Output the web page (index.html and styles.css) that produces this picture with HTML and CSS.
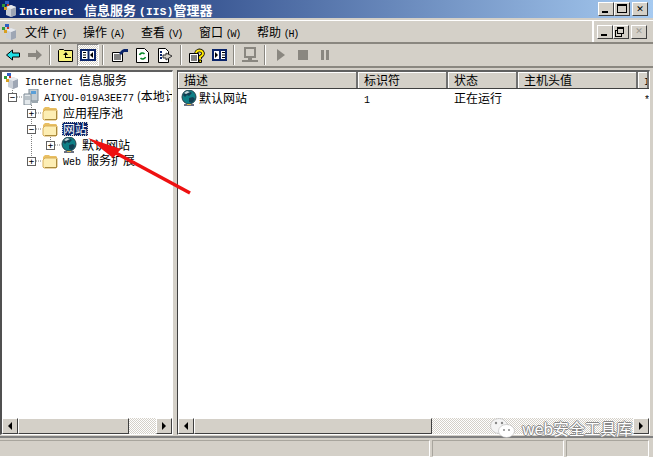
FILE: index.html
```html
<!DOCTYPE html>
<html lang="zh">
<head>
  <meta charset="UTF-8">
  <title>Internet 信息服务 (IIS)管理器</title>
  <link rel="stylesheet" href="styles.css">
</head>
<body>
  <svg class="defs" width="0" height="0">
    <symbol id="folder" viewBox="0 0 16 16">
      <path d="M1 4l2-2h4l1 1h6l1 1v10H1z" fill="#e9bf62"/>
      <path d="M1 7l2-2h12v9l-1 1H2l-1-1z" fill="#fdeeb4" stroke="#d8ae58"/>
      <path d="M3 14.5h11.5V6" fill="none" stroke="#a98a3c"/>
    </symbol>
    <symbol id="globe" viewBox="0 0 16 16">
      <circle cx="8" cy="7" r="7" fill="#0f7f86" stroke="#27404a"/>
      <path d="M4 2l4-1 3 2-3 3-2-1-2 2-2-2zM8 8l4-1 2 2-3 4-3-1z" fill="#123f52"/>
      <path d="M3 3l3-2 3 1-4 2z" fill="#c8d8dc"/>
      <path d="M3 14h10v2H3z" fill="#6b6f80"/>
      <path d="M6 14h4v1H6z" fill="#e0b84c"/>
    </symbol>
    <symbol id="server" viewBox="0 0 16 16">
      <path d="M6 0h9v12H6z" fill="#c3ccd2" stroke="#7c8a95"/>
      <path d="M8 2h5v3H8z" fill="#5a9fd8"/>
      <path d="M1 5h7v11H1z" fill="#e4e9ec" stroke="#7c8a95"/>
      <path d="M2 8h5M2 10h5" stroke="#8b98a2"/>
      <path d="M9 12h6v2H9z" fill="#9aa6ae"/>
    </symbol>
    <symbol id="iis" viewBox="0 0 16 16">
      <path d="M4 6l5-2 5 2v8l-5 2-5-2z" fill="#c9ced6"/>
      <path d="M9 8v8l5-2V6z" fill="#9ea6b4"/>
      <path d="M4 6l5 2 5-2-5-2z" fill="#e6e9ee"/>
      <path d="M0 3h3v3H0z" fill="#2f9a3c"/>
      <path d="M3 0h4v3H3z" fill="#2d5fc4"/>
      <path d="M2 6h3v3H2z" fill="#d8a020"/>
      <path d="M5 3h2v2H5z" fill="#c83c28"/>
    </symbol>
  </svg>

  <div class="titlebar">
    <svg class="title-icon"><use href="#iis"/></svg>
    <div class="title-text"><span class="mono">Internet </span> 信息服务 <span class="mono">(IIS)</span>管理器</div>
    <div class="caption-btns">
      <button class="cap"><span class="glyph-min"></span></button>
      <button class="cap"><span class="glyph-max"></span></button>
      <button class="cap cap-close">✕</button>
    </div>
  </div>

  <div class="menubar">
    <svg class="menu-icon"><use href="#iis"/></svg>
    <div class="menu-item">文件 <span class="hot">(F)</span></div>
    <div class="menu-item">操作 <span class="hot">(A)</span></div>
    <div class="menu-item">查看 <span class="hot">(V)</span></div>
    <div class="menu-item">窗口 <span class="hot">(W)</span></div>
    <div class="menu-item">帮助 <span class="hot">(H)</span></div>
    <div class="child-btns">
      <button class="cap"><span class="glyph-min"></span></button>
      <button class="cap"><span class="glyph-restore"></span></button>
      <button class="cap cap-off">✕</button>
    </div>
  </div>

  <div class="toolbar">
    <div class="tb"><svg width="14" height="14"><path d="M.5 7L6.5 2v3h7v4h-7v3z" fill="#1fe0e6" stroke="#000"/></svg></div>
    <div class="tb"><svg width="14" height="14"><path d="M14 7L8 1.5V5H0v4h8v3.5z" fill="#8a8780"/></svg></div>
    <div class="sep"></div>
    <div class="tb"><svg width="16" height="14"><path d="M.5 13.5V2.5l1-1h4l1 1h8v11z" fill="#f8f27a" stroke="#000"/><path d="M8 4L5 7h2v3h6V9H8V7h2z" fill="#000"/></svg></div>
    <div class="tb tb-on"><svg width="16" height="12"><path d="M1 1h14v10H1z" fill="#fff" stroke="#0a246a" stroke-width="2"/><path d="M8.5 1v10" stroke="#0a246a" stroke-width="2"/><path d="M3 3.5h3M3 6h3M3 8.5h3" stroke="#000"/><path d="M13 3v6l-3-3z" fill="#000"/></svg></div>
    <div class="sep"></div>
    <div class="tb tb-wide"><svg width="16" height="14"><path d="M.5 4.5h10v9H.5z" fill="#fff" stroke="#000"/><path d="M2 7h7M2 9h7M2 11h7" stroke="#000"/><path d="M7 5l3-3 2-1h4v3h-4l-3 3z" fill="#0a246a"/></svg></div>
    <div class="tb tb-wide"><svg width="13" height="15"><path d="M.5.5h8l4 4v10H.5z" fill="#fff" stroke="#000"/><path d="M3.5 7a3 3 0 0 1 5-1M9.5 9a3 3 0 0 1-5 1" fill="none" stroke="#0a8a2a" stroke-width="1.6"/></svg></div>
    <div class="tb tb-wide"><svg width="15" height="15"><path d="M.5.5h7l3 3v11H.5z" fill="#fff" stroke="#000"/><path d="M2 4h2M2 7h2M2 10h2" stroke="#0a246a" stroke-width="2"/><path d="M8 5v2H5v3h3v2l6-4z" fill="#d4d0c8" stroke="#333"/></svg></div>
    <div class="sep"></div>
    <div class="tb"><svg width="16" height="15"><path d="M.5 5.5h9v9h-9z" fill="#fff" stroke="#000"/><path d="M2 8h6M2 10h6M2 12h6" stroke="#000"/><path d="M7 5a3.5 3 0 1 1 6 2.5L11 9v2" fill="none" stroke="#000" stroke-width="3.6"/><path d="M7 5a3.5 3 0 1 1 6 2.5L11 9v2" fill="none" stroke="#ffe800" stroke-width="2"/><path d="M10 12h2.5v2.5H10z" fill="#ffe800" stroke="#000"/></svg></div>
    <div class="tb"><svg width="15" height="12"><path d="M1 1h13v10H1z" fill="#fff" stroke="#0a246a" stroke-width="2"/><path d="M8 1v10" stroke="#0a246a" stroke-width="2"/><path d="M10 3.5h3M10 6h3M10 8.5h3" stroke="#000"/><path d="M3 3v6l3-3z" fill="#000"/></svg></div>
    <div class="sep"></div>
    <div class="tb"><svg width="18" height="16"><path d="M4 1h10v9H4z" fill="none" stroke="#8a8780" stroke-width="2"/><path d="M1 13h16v2H1zM7 10h4v3H7z" fill="#8a8780"/></svg></div>
    <div class="sep"></div>
    <div class="tb"><svg width="8" height="12"><path d="M0 0l8 6-8 6z" fill="#8a8780"/></svg></div>
    <div class="tb"><svg width="10" height="10"><path d="M0 0h10v10H0z" fill="#8a8780"/></svg></div>
    <div class="tb"><svg width="8" height="10"><path d="M0 0h3v10H0zM5 0h3v10H5z" fill="#8a8780"/></svg></div>
  </div>

  <div class="panes">
    <div class="pane pane-left">
      <div class="pane-body tree">
        <svg class="tree-lines" width="64" height="100">
          <path d="M12.5 16V22M17 25H23M31.5 33V89M36 41H42M36 57H42M36 89H42M50.5 63V69M55 73H61" fill="none" stroke="#808080" stroke-dasharray="1 1"/>
        </svg>
        <div class="node lvl0"><svg class="node-icon"><use href="#iis"/></svg><span class="label"><span class="mono-sm">Internet </span> 信息服务</span></div>
        <div class="node lvl1"><span class="exp">−</span><svg class="node-icon"><use href="#server"/></svg><span class="label"><span class="mono-sm">AIYOU-019A3EE77</span> (本地计算机)</span></div>
        <div class="node lvl2"><span class="exp">+</span><svg class="node-icon"><use href="#folder"/></svg><span class="label">应用程序池</span></div>
        <div class="node lvl2"><span class="exp">−</span><svg class="node-icon"><use href="#folder"/></svg><span class="label label-sel">网站</span></div>
        <div class="node lvl3"><span class="exp">+</span><svg class="node-icon"><use href="#globe"/></svg><span class="label">默认网站</span></div>
        <div class="node lvl2"><span class="exp">+</span><svg class="node-icon"><use href="#folder"/></svg><span class="label"><span class="mono-sm">Web </span> 服务扩展</span></div>
      </div>
      <div class="hscroll">
        <div class="sb-btn"><span class="arrow-l"></span></div>
        <div class="sb-thumb thumb-left"></div>
        <div class="sb-track"></div>
        <div class="sb-btn"><span class="arrow-r"></span></div>
      </div>
    </div>

    <div class="pane pane-right">
      <div class="pane-body list">
        <div class="list-head">
          <div class="col col-name">描述</div>
          <div class="col col-id">标识符</div>
          <div class="col col-state">状态</div>
          <div class="col col-host">主机头值</div>
          <div class="col col-ip"><span class="mono-sm">I</span></div>
        </div>
        <div class="list-row">
          <div class="cell col-name cell-name"><svg class="node-icon"><use href="#globe"/></svg>默认网站</div>
          <div class="cell col-id"><span class="mono-sm">1</span></div>
          <div class="cell col-state">正在运行</div>
          <div class="cell col-host"></div>
          <div class="cell col-ip"><span class="mono-sm">*</span></div>
        </div>
      </div>
      <div class="hscroll">
        <div class="sb-btn"><span class="arrow-l"></span></div>
        <div class="sb-thumb thumb-right"></div>
        <div class="sb-track"></div>
        <div class="sb-btn"><span class="arrow-r"></span></div>
      </div>
    </div>
  </div>

  <div class="statusbar">
    <div class="st st-a"></div>
    <div class="st st-b"></div>
    <div class="st st-c"></div>
  </div>

  <svg class="red-arrow" width="653" height="457">
    <path d="M190 193L114 152" stroke="#ee1111" stroke-width="3.5" fill="none"/>
    <path d="M88 138L121 149 113 158z" fill="#ee1111"/>
  </svg>

  <div class="watermark">
    <svg width="25" height="20" viewBox="0 0 25 20">
      <ellipse cx="9" cy="8" rx="8.5" ry="7.5" fill="#f4f4f4" stroke="#aaa" stroke-width="0.5"/>
      <ellipse cx="16.5" cy="13" rx="8" ry="6.5" fill="#fff" stroke="#aaa" stroke-width="0.5"/>
      <circle cx="6" cy="5" r="1.2" fill="#888"/><circle cx="12" cy="5" r="1.2" fill="#888"/>
      <circle cx="14" cy="12" r="1" fill="#888"/><circle cx="19" cy="12" r="1" fill="#888"/>
    </svg>
    <span>web安全工具库</span>
  </div>
</body>
</html>
```

FILE: styles.css
```css
* {
  box-sizing: border-box;
}
body {
  margin: 0;
  width: 653px;
  height: 457px;
  overflow: hidden;
  position: relative;
  display: flex;
  flex-direction: column;
  background: #d4d0c8;
  font-family: "Noto Sans CJK SC", sans-serif;
  font-size: 12px;
  color: #000;
}
.defs {
  position: absolute;
}
.mono {
  font-family: "Liberation Mono", monospace;
  font-size: 11px;
  letter-spacing: 0.3px;
}
.mono-sm {
  font-family: "Liberation Mono", monospace;
  font-size: 10px;
}

/* title bar */
.titlebar {
  height: 18px;
  flex: none;
  display: flex;
  align-items: center;
  padding: 0 5px 0 2px;
  background: linear-gradient(to right, #0a246a, #a6caf0);
  color: #fff;
  font-weight: bold;
}
.title-icon {
  width: 16px;
  height: 16px;
  flex: none;
}
.title-text {
  margin-left: 1px;
  font-size: 13px;
  white-space: pre;
}
.caption-btns {
  margin-left: auto;
  display: flex;
}
.cap {
  width: 16px;
  height: 14px;
  padding: 0;
  margin: 0;
  background: #d4d0c8;
  border: 1px solid;
  border-color: #fff #404040 #404040 #fff;
  position: relative;
  font-size: 9px;
  line-height: 11px;
  font-weight: bold;
  font-family: "DejaVu Sans", sans-serif;
  color: #000;
}
.cap-close {
  margin-left: 2px;
}
.cap-off {
  margin-left: 2px;
  color: #9a978f;
}
.glyph-min {
  position: absolute;
  left: 3px;
  bottom: 2px;
  width: 6px;
  height: 2px;
  background: #000;
}
.glyph-max {
  position: absolute;
  left: 2px;
  top: 1px;
  width: 10px;
  height: 9px;
  border: 1px solid #000;
  border-top-width: 2px;
}
.glyph-restore {
  position: absolute;
  left: 3px;
  top: 1px;
  width: 7px;
  height: 7px;
  border: 1px solid #000;
  border-top-width: 2px;
  box-shadow: -2px 3px 0 -1px #d4d0c8, -2px 3px 0 0 #000;
}

/* menu */
.menubar {
  height: 24px;
  flex: none;
  margin-top: 2px;
  display: flex;
  align-items: center;
  padding-left: 2px;
  border-top: 1px solid #fff;
  border-bottom: 2px solid #8a8780;
}
.menu-icon {
  width: 16px;
  height: 16px;
  flex: none;
}
.menu-item {
  margin-left: 7px;
  width: 51px;
  white-space: nowrap;
}
.hot {
  font-size: 10px;
  font-family: "Liberation Mono", monospace;
  letter-spacing: -1.2px;
}
.child-btns {
  margin-left: auto;
  height: 100%;
  display: flex;
  align-items: center;
  padding: 0 6px 0 3px;
  border-left: 2px solid #fff;
}

/* toolbar */
.toolbar {
  height: 24px;
  flex: none;
  display: flex;
  align-items: center;
  padding-left: 2px;
  border-bottom: 2px solid #8a8780;
}
.tb {
  width: 22px;
  height: 22px;
  display: flex;
  align-items: center;
  justify-content: center;
}
.tb-wide {
  width: 23px;
}
.tb-on {
  background: repeating-conic-gradient(#fff 0 25%, #d4d0c8 0 50%) 0 0 / 2px 2px;
  border: 1px solid;
  border-color: #808080 #fff #fff #808080;
}
.sep {
  width: 2px;
  height: 20px;
  margin: 0 4px 0 3px;
  background: #8a8780;
  border-right: 1px solid #fff;
}

/* panes */
.panes {
  flex: 1;
  min-height: 0;
  display: flex;
  gap: 4px;
  padding-top: 2px;
}
.pane {
  display: flex;
  flex-direction: column;
  border: 1px solid;
  border-color: #404040 #fff #fff #404040;
  border-top: 2px solid #606060;
  min-width: 0;
}
.pane-left {
  width: 173px;
  flex: none;
  border-left: 2px solid #505050;
}
.pane-right {
  flex: 1;
  margin-right: 3px;
}
.pane-body {
  flex: 1;
  min-height: 0;
  background: #fff;
  overflow: hidden;
}
.tree {
  position: relative;
  padding-top: 1px;
}
.tree-lines {
  position: absolute;
  left: -2px;
  top: 0;
}
.node {
  height: 16px;
  display: flex;
  align-items: center;
  white-space: nowrap;
  position: relative;
}
.lvl0 {
  padding-left: 2px;
}
.lvl1 {
  padding-left: 6px;
}
.lvl2 {
  padding-left: 25px;
}
.lvl3 {
  padding-left: 44px;
}
.exp {
  width: 9px;
  height: 9px;
  margin-right: 6px;
  flex: none;
  border: 1px solid #606060;
  background: #fff;
  font-size: 9px;
  line-height: 7px;
  text-align: center;
  font-family: "DejaVu Sans Mono", monospace;
}
.node-icon {
  width: 16px;
  height: 16px;
  flex: none;
}
.label {
  margin-left: 5px;
  line-height: 14px;
}
.label-sel {
  margin-left: 4px;
  padding: 0 1px;
  background: #0a246a;
  color: #fff;
  outline: 1px dotted #d4d0c8;
  outline-offset: -1px;
}

/* list */
.list-head {
  height: 17px;
  display: flex;
  background: #d4d0c8;
  border-bottom: 1px solid #404040;
}
.col {
  padding-left: 6px;
  line-height: 16px;
  border-right: 2px solid #707070;
  box-shadow: inset 1px 1px 0 #fff;
  white-space: nowrap;
  overflow: hidden;
}
.col-name {
  width: 180px;
  flex: none;
}
.col-id {
  width: 90px;
  flex: none;
}
.col-state {
  width: 70px;
  flex: none;
}
.col-host {
  width: 120px;
  flex: none;
}
.col-ip {
  flex: 1;
}
.list-row {
  height: 17px;
  display: flex;
  align-items: center;
}
.cell {
  padding-left: 6px;
}
.cell.col-name {
  padding-left: 3px;
}
.cell-name {
  display: flex;
  align-items: center;
  gap: 2px;
}

/* scrollbars */
.hscroll {
  height: 16px;
  flex: none;
  display: flex;
  background: repeating-conic-gradient(#fff 0 25%, #d4d0c8 0 50%) 0 0 / 2px 2px;
}
.sb-btn {
  width: 16px;
  flex: none;
  display: flex;
  align-items: center;
  justify-content: center;
  background: #d4d0c8;
  border: 1px solid;
  border-color: #fff #404040 #404040 #fff;
}
.sb-thumb {
  flex: none;
  background: #d4d0c8;
  border: 1px solid;
  border-color: #fff #404040 #404040 #fff;
}
.thumb-left {
  width: 111px;
}
.thumb-right {
  width: 238px;
}
.sb-track {
  flex: 1;
}
.arrow-l {
  border: 4px solid transparent;
  border-left: 0;
  border-right-color: #000;
}
.arrow-r {
  border: 4px solid transparent;
  border-right: 0;
  border-left-color: #000;
}

/* status bar */
.statusbar {
  height: 21px;
  flex: none;
  display: flex;
  gap: 2px;
  padding: 2px 4px 0 0;
  border-top: 2px solid #808080;
  margin-top: 1px;
}
.st {
  height: 17px;
  border: 1px solid;
  border-color: #a8a59d #fff #fff #a8a59d;
}
.st-a {
  flex: 1;
  border-left: 0;
}
.st-b {
  width: 132px;
}
.st-c {
  width: 83px;
}

/* things painted over the window */
.red-arrow {
  position: absolute;
  left: 0;
  top: 0;
  pointer-events: none;
}
.watermark {
  position: absolute;
  left: 490px;
  top: 418px;
  display: flex;
  align-items: center;
  gap: 7px;
  color: #fff;
  font-size: 16px;
  line-height: 20px;
  letter-spacing: -0.2px;
  font-family: "Noto Sans CJK SC", sans-serif;
  text-shadow: 1px 0 0 #888, -1px 0 0 #888, 0 1px 0 #888, 0 -1px 0 #888;
}
```
